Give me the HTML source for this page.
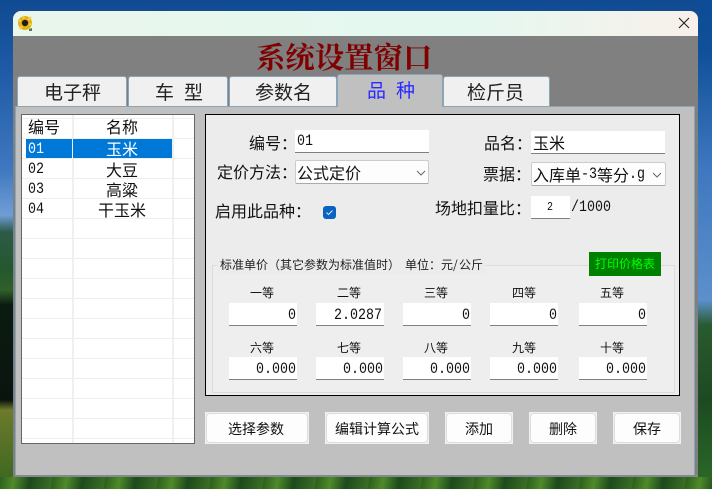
<!DOCTYPE html>
<html lang="zh"><head><meta charset="utf-8">
<style>
html,body{margin:0;padding:0}
body{width:712px;height:489px;overflow:hidden;position:relative;background:#1a4f96;font-family:"Liberation Mono","WenQuanYi Zen Hei","Noto Sans CJK SC",sans-serif;color:#111}
div,span,svg{position:absolute;box-sizing:border-box}
.t{white-space:nowrap;font-size:16px;line-height:20px;font-family:"WenQuanYi Zen Hei","Noto Sans CJK SC",sans-serif}
.s{font-size:12px;line-height:14px}
.m{font-family:"Liberation Mono",monospace;font-size:16px;line-height:20px;white-space:nowrap;transform:scaleX(.833);transform-origin:0 50%}
.tab{background:#f0f0f0;border:1px solid #8aa4b8;border-bottom:none;border-radius:3px 3px 0 0;top:76px;height:30px}
.tt{font-size:19px;line-height:24px;top:80px;color:#222}
.in{background:#fff;border-bottom:1px solid #808080}
.g{background:#fff;border-bottom:1px solid #808080;width:68px;height:23px}
.v{text-align:right;width:68px;font-family:"Liberation Mono",monospace;font-size:16px;line-height:22px;color:#111;transform:scaleX(.833);transform-origin:100% 50%;white-space:nowrap}
.cb{background:#fdfdfd;border:1px solid #ccc;border-bottom:1px solid #aaa;border-radius:2px}
.btn{top:412px;height:32px;background:#f0f0f0}
.btn i{position:absolute;left:1px;top:1px;right:1px;bottom:1px;background:#fdfdfd;border:1px solid #ddd;border-radius:4px;display:block}
.bt{top:420px;font-size:14px;line-height:18px}
</style></head><body>
<div style="left:0;top:0;width:712px;height:489px;background:linear-gradient(to bottom,#0f4a92 0,#1e5aa6 70px,#3f78c0 170px,#6f9ed6 215px,#2d5a48 232px,#24582c 270px,#30602a 290px,#0a1c12 305px,#0a140e 400px,#6d7a2c 410px,#38661f 489px)"></div>
<div style="left:698px;top:0;width:14px;height:489px;background:linear-gradient(to bottom,#0d4c96 0,#0f5098 50px,#3f78c0 170px,#5c90cc 300px,#2a5a30 325px,#1c4a22 400px,#2d6a28 489px)"></div>
<div style="left:0;top:477px;width:712px;height:12px;background:repeating-linear-gradient(100deg,#2f5f1c 0,#4f8a2a 14px,#1e4a1c 30px,#3a6e24 52px)"></div>

<div style="left:13px;top:11px;width:685px;height:466px;background:#808080;border-radius:8px 8px 0 0;overflow:hidden">
<div style="left:0;top:0;width:685px;height:25px;background:linear-gradient(to right,#e9f6ec,#e4f8f0 65%,#f8f0ea)"></div>
</div>

<svg style="left:17px;top:14px" width="16" height="18" viewBox="0 0 16 18"><g fill="#e2b21c"><circle cx="8" cy="9" r="7"/></g><path d="M1 6l3 1M14 3l-3 3M15 11l-3-1M6 2l1 3M3 15l2-3" stroke="#f2d040" stroke-width="2"/><circle cx="8" cy="9" r="3.2" fill="#2a1c08"/><path d="M12 15l3-1v3h-3z" fill="#5a7a4a"/></svg>
<svg style="left:678px;top:17px" width="12" height="12" viewBox="0 0 12 12"><path d="M1 1l10 10M11 1L1 11" stroke="#222" stroke-width="1.1" fill="none"/></svg>

<div class="t" style="left:256px;top:38px;font-family:'Noto Serif CJK SC',serif;font-weight:700;font-size:29.4px;line-height:36px;color:#800000">系统设置窗口</div>

<div style="left:15px;top:106px;width:680px;height:369px;background:#c0c0c0;border:1px solid #8aa4b8;border-width:1px 1px 0 1px"></div>
<div style="left:15px;top:475px;width:683px;height:2px;background:#808a90"></div>

<div class="tab" style="left:17px;width:110px"></div>
<div class="tab" style="left:128px;width:100px"></div>
<div class="tab" style="left:229px;width:108px"></div>
<div class="tab" style="left:337px;top:74px;width:106px;height:33px;background:#c0c0c0;border-color:#8aa4b8"></div>
<div class="tab" style="left:443px;width:107px"></div>
<div class="t tt" style="left:44px">电子秤</div>
<div class="t tt" style="left:155px">车</div><div class="t tt" style="left:184px">型</div>
<div class="t tt" style="left:255px">参数名</div>
<div class="t tt" style="left:367px;top:78px;color:#2a2aff">品</div><div class="t tt" style="left:396px;top:78px;color:#2a2aff">种</div>
<div class="t tt" style="left:467px">检斤员</div>

<div style="left:21px;top:114px;width:174px;height:330px;background:#fff;border:1px solid #666"></div>
<div style="left:22px;top:115px;width:172px;height:328px;background-image:linear-gradient(to bottom,transparent 19px,#efefef 19px),linear-gradient(to right,#efefef,#efefef),linear-gradient(to right,#efefef,#efefef);background-size:100% 20px,2px 100%,2px 100%;background-position:0 4px,50px 0,150px 0;background-repeat:repeat-y,no-repeat,no-repeat"></div>
<div style="left:26px;top:139px;width:146px;height:19px;background:#0078d7"></div>
<div style="left:72px;top:139px;width:1px;height:19px;background:#f0f0f0"></div>
<div class="t" style="left:28px;top:116px">编号</div>
<div class="t" style="left:106px;top:116px">名称</div>
<div class="m" style="left:28px;top:139px;color:#fff">01</div>
<div class="t" style="left:106px;top:138px;color:#fff">玉米</div>
<div class="m" style="left:28px;top:159px">02</div>
<div class="t" style="left:106px;top:159px">大豆</div>
<div class="m" style="left:28px;top:179px">03</div>
<div class="t" style="left:106px;top:179px">高粱</div>
<div class="m" style="left:28px;top:199px">04</div>
<div class="t" style="left:98px;top:199px">干玉米</div>

<div style="left:205px;top:114px;width:475px;height:282px;background:#ececec;border:1px solid #000"></div>

<div class="t" style="left:249px;top:132px">编号：</div>
<div class="in" style="left:295px;top:130px;width:134px;height:23px"></div>
<div class="m" style="left:297px;top:131px">01</div>
<div class="t" style="left:484px;top:132px">品名：</div>
<div class="in" style="left:531px;top:131px;width:134px;height:23px"></div>
<div class="t" style="left:533px;top:132px">玉米</div>

<div class="t" style="left:217px;top:161px">定价方法：</div>
<div class="cb" style="left:295px;top:160px;width:134px;height:24px"></div>
<div class="t" style="left:297px;top:162px">公式定价</div>
<svg style="left:416px;top:170px" width="10" height="6" viewBox="0 0 10 6"><path d="M1 1l4 4 4-4" stroke="#666" fill="none"/></svg>
<div class="t" style="left:483px;top:163px">票据：</div>
<div class="cb" style="left:531px;top:162px;width:135px;height:24px"></div>
<div class="t" style="left:533px;top:164px">入库单</div>
<div class="m" style="left:581px;top:164px">-3</div>
<div class="t" style="left:597px;top:164px">等分</div>
<div class="m" style="left:629px;top:164px">.g</div>
<svg style="left:652px;top:172px" width="10" height="6" viewBox="0 0 10 6"><path d="M1 1l4 4 4-4" stroke="#666" fill="none"/></svg>

<div class="t" style="left:215px;top:200px">启用此品种：</div>
<div style="left:323px;top:206px;width:13px;height:13px;background:#0a63c0;border-radius:3px"></div>
<svg style="left:323px;top:206px" width="13" height="13" viewBox="0 0 13 13"><path d="M3.5 6.5l2 2 4-4" stroke="#dfeaf8" stroke-width="1" fill="none"/></svg>
<div class="t" style="left:435px;top:197px">场地扣量比：</div>
<div class="in" style="left:531px;top:196px;width:39px;height:23px"></div>
<div class="m" style="left:547px;top:197px;font-size:12px">2</div>
<div class="m" style="left:571px;top:197px">/1000</div>

<div style="left:212px;top:265px;width:463px;height:128px;border:1px solid #dcdcdc;background:#eeeeee"></div>
<div style="left:218px;top:256px;width:268px;height:18px;background:#ececec"></div>
<div class="t s" style="left:220px;top:258px;color:#222">标准单价（其它参数为标准值时）</div>
<div class="t s" style="left:405px;top:258px;color:#222">单位：元</div>
<div class="t s" style="left:453px;top:258px;color:#222">/</div>
<div class="t s" style="left:459px;top:258px;color:#222">公斤</div>
<div class="t s" style="left:589px;top:252px;width:72px;height:24px;background:#008000;color:#00ff00;text-align:center;line-height:24px">打印价格表</div>

<div class="t s" style="left:250px;top:286px">一等</div><div class="t s" style="left:337px;top:286px">二等</div><div class="t s" style="left:424px;top:286px">三等</div><div class="t s" style="left:512px;top:286px">四等</div><div class="t s" style="left:600px;top:286px">五等</div>
<div class="g" style="left:229px;top:303px"></div><div class="g" style="left:316px;top:303px"></div><div class="g" style="left:403px;top:303px"></div><div class="g" style="left:490px;top:303px"></div><div class="g" style="left:579px;top:303px"></div>
<div class="v" style="left:228px;top:304px">0</div><div class="v" style="left:314px;top:304px">2.0287</div><div class="v" style="left:402px;top:304px">0</div><div class="v" style="left:489px;top:304px">0</div><div class="v" style="left:578px;top:304px">0</div>

<div class="t s" style="left:250px;top:341px">六等</div><div class="t s" style="left:337px;top:341px">七等</div><div class="t s" style="left:424px;top:341px">八等</div><div class="t s" style="left:512px;top:341px">九等</div><div class="t s" style="left:600px;top:341px">十等</div>
<div class="g" style="left:229px;top:357px"></div><div class="g" style="left:316px;top:357px"></div><div class="g" style="left:403px;top:357px"></div><div class="g" style="left:490px;top:357px"></div><div class="g" style="left:579px;top:357px"></div>
<div class="v" style="left:228px;top:358px">0.000</div><div class="v" style="left:315px;top:358px">0.000</div><div class="v" style="left:402px;top:358px">0.000</div><div class="v" style="left:489px;top:358px">0.000</div><div class="v" style="left:578px;top:358px">0.000</div>

<div class="btn" style="left:205px;width:104px"><i></i></div>
<div class="btn" style="left:325px;width:104px"><i></i></div>
<div class="btn" style="left:445px;width:68px"><i></i></div>
<div class="btn" style="left:529px;width:68px"><i></i></div>
<div class="btn" style="left:613px;width:68px"><i></i></div>
<div class="t bt" style="left:228px">选择参数</div>
<div class="t bt" style="left:335px">编辑计算公式</div>
<div class="t bt" style="left:465px">添加</div>
<div class="t bt" style="left:549px">删除</div>
<div class="t bt" style="left:633px">保存</div>
</body></html>
